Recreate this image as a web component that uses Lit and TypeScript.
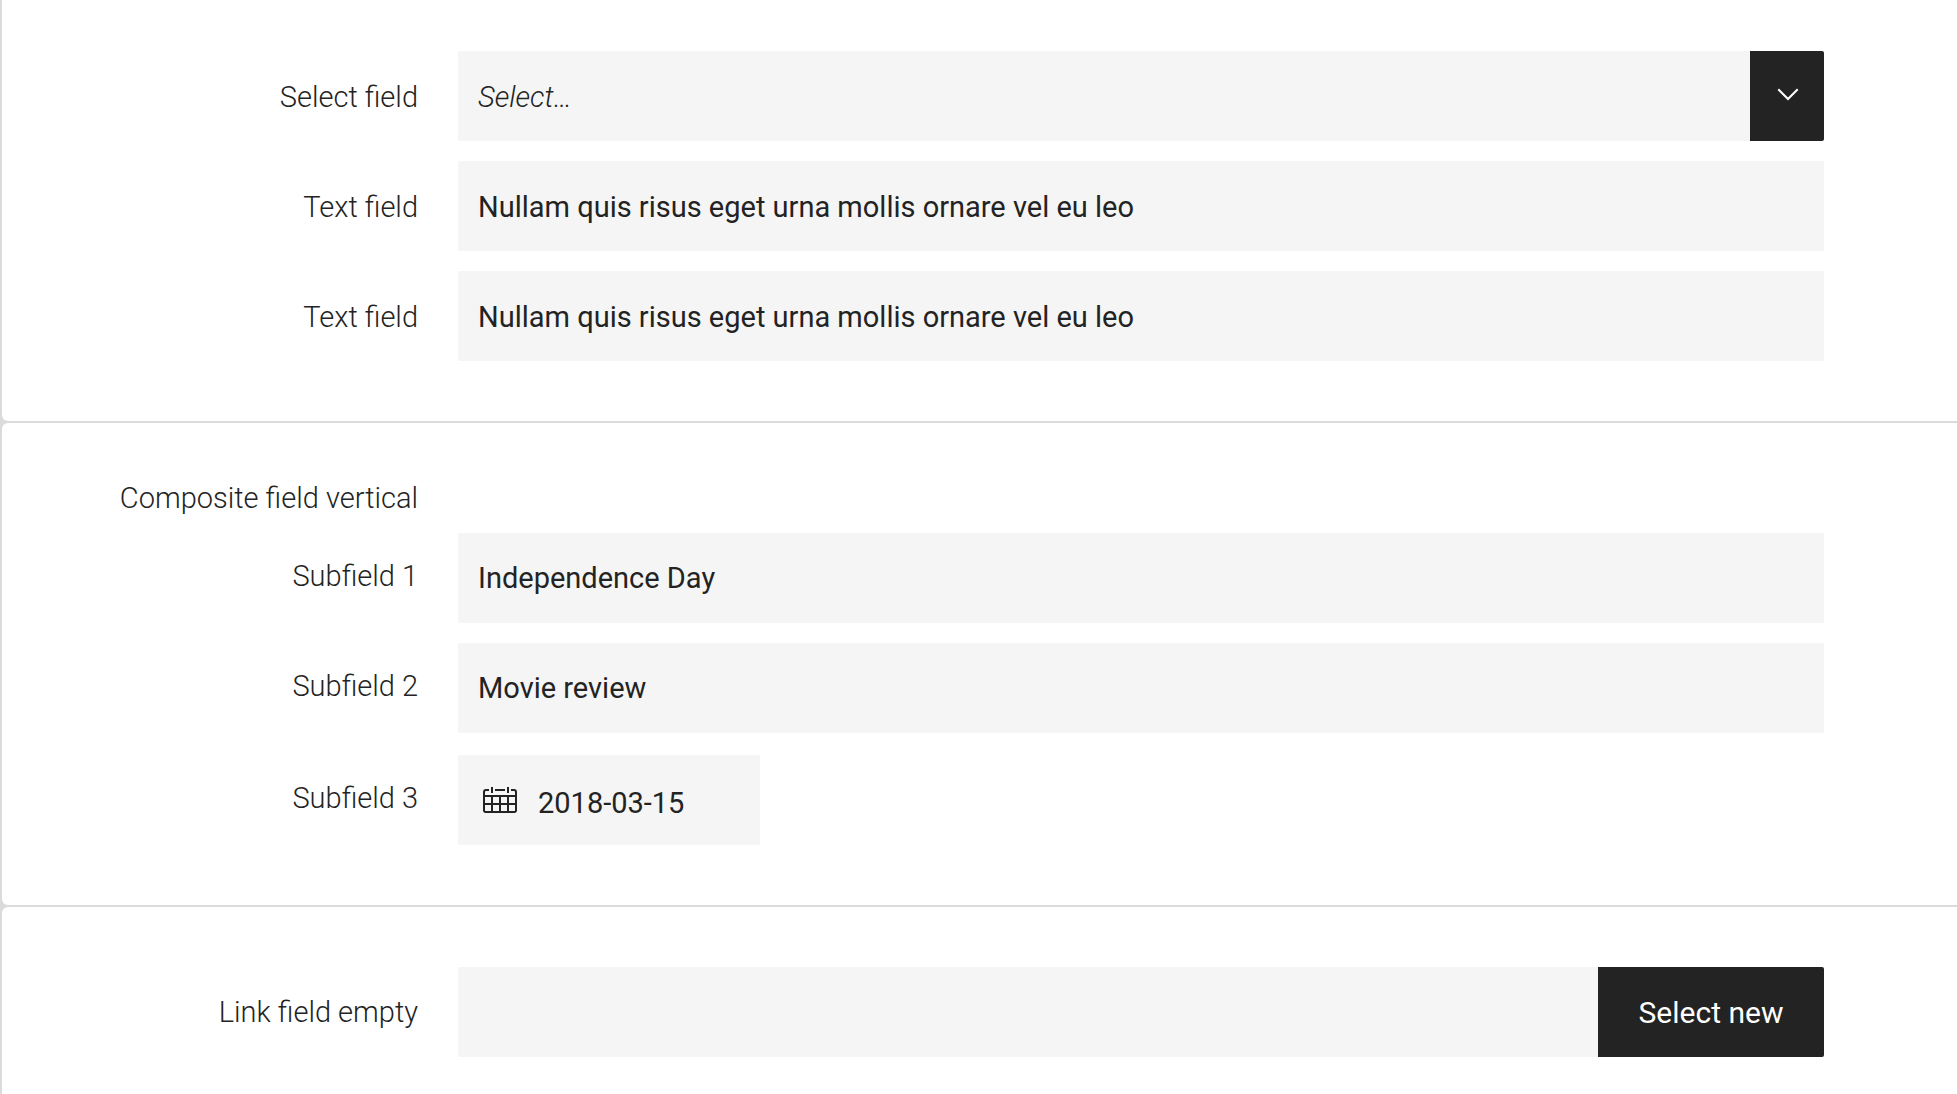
import { LitElement, html, css } from "lit";
import { customElement } from "lit/decorators.js";

@customElement("app-root")
export class AppRoot extends LitElement {
  static styles = css`
    :host {
      display: block;
      font-family: Roboto, "Liberation Sans", sans-serif;
      font-size: 29px;
      line-height: 36px;
      color: #232323;
    }
    * {
      box-sizing: border-box;
    }
    .page {
      display: flex;
      flex-direction: column;
      gap: 2px;
      height: 100vh;
      overflow: hidden;
      padding-left: 2px;
      background: #dbdbdb;
    }
    .card {
      flex: none;
      display: flex;
      flex-direction: column;
      gap: 20px;
      padding: 60px 133px 60px 0;
      border-radius: 6px 0 0 6px;
      background: #fff;
    }
    .card.first {
      padding-top: 51px;
      border-top-left-radius: 0;
    }
    .row {
      display: grid;
      grid-template-columns: 416px minmax(0, 1fr);
      column-gap: 40px;
      align-items: center;
    }
    .row.heading {
      line-height: 30px;
    }
    .row.spaced {
      margin-top: 2px;
    }
    .label {
      font-weight: 300;
      text-align: right;
    }
    .field {
      display: flex;
      height: 90px;
      border-radius: 2px;
      overflow: hidden;
      background: #f5f5f5;
    }
    .field:focus-within {
      box-shadow: 0 0 0 2px #dbdbdb;
    }
    input,
    select,
    button {
      font: inherit;
      color: inherit;
      border: 0;
      border-radius: 0;
      margin: 0;
      outline: none;
      background: transparent;
    }
    .input {
      flex: 1;
      min-width: 0;
      padding: 0 20px;
    }
    .first .label,
    .first .input {
      padding-top: 2px;
    }
    .composite .field-label {
      padding-bottom: 4px;
    }
    .dropdown {
      display: grid;
      grid-template-columns: minmax(0, 1fr) 74px;
    }
    .select {
      grid-area: 1 / 1 / 2 / 3;
      appearance: none;
      padding: 2px 94px 0 20px;
      font-style: italic;
      font-weight: 300;
      cursor: pointer;
    }
    .arrow {
      grid-area: 1 / 2;
      display: grid;
      place-items: center;
      padding: 0 0 2px 2px;
      background: #232323;
      color: #fff;
      pointer-events: none;
    }
    .date {
      width: 302px;
    }
    .date .input {
      padding-top: 6px;
    }
    .picker {
      display: grid;
      place-items: center;
      width: 60px;
      padding: 0 0 0 24px;
      cursor: pointer;
    }
    .action {
      min-width: 226px;
      padding: 2px 40px 0;
      background: #232323;
      color: #fff;
      font-size: 30px;
      cursor: pointer;
    }
    svg {
      display: block;
    }
  `;

  private textRow(id: string, label: string, value: string) {
    return html`<div class="row">
      <label class="label field-label" for=${id}>${label}</label>
      <div class="field"><input class="input" id=${id} type="text" .value=${value} /></div>
    </div>`;
  }

  render() {
    return html`<main class="page">
      <section class="card first">
        <div class="row">
          <label class="label" for="select">Select field</label>
          <div class="field dropdown">
            <select class="select" id="select"><option>Select…</option></select>
            <span class="arrow" aria-hidden="true">
              <svg width="22" height="14" viewBox="0 0 22 14" fill="none" stroke="currentColor" stroke-width="2">
                <path d="M2 2l9 9 9-9" stroke-linecap="square" />
              </svg>
            </span>
          </div>
        </div>
        ${this.textRow("text-1", "Text field", "Nullam quis risus eget urna mollis ornare vel eu leo")}
        ${this.textRow("text-2", "Text field", "Nullam quis risus eget urna mollis ornare vel eu leo")}
      </section>

      <section class="card composite" role="group" aria-labelledby="composite">
        <div class="row heading"><span class="label" id="composite">Composite field vertical</span></div>
        ${this.textRow("sub-1", "Subfield 1", "Independence Day")}
        ${this.textRow("sub-2", "Subfield 2", "Movie review")}
        <div class="row spaced">
          <label class="label field-label" for="sub-3">Subfield 3</label>
          <div class="field date">
            <button class="picker" type="button" aria-label="Open calendar">
              <svg width="34" height="26" viewBox="0 0 34 26" fill="none" stroke="currentColor" stroke-width="2">
                <path d="M6 3H3a2 2 0 0 0-2 2v18.500a1.500 1.500 0 0 0 1.500 1.500h29a1.500 1.500 0 0 0 1.500-1.500V5a2 2 0 0 0-2-2h-3M12 3h10M9 0v6M25 0v6" />
                <path d="M1 9h32M1 17h32M9 9v16M17 9v16M25 9v16" />
              </svg>
            </button>
            <input class="input" id="sub-3" type="text" value="2018-03-15" />
          </div>
        </div>
      </section>

      <section class="card">
        <div class="row">
          <label class="label" for="link">Link field empty</label>
          <div class="field">
            <input class="input" id="link" type="text" />
            <button class="action" type="button">Select new</button>
          </div>
        </div>
      </section>
    </main>`;
  }
}
